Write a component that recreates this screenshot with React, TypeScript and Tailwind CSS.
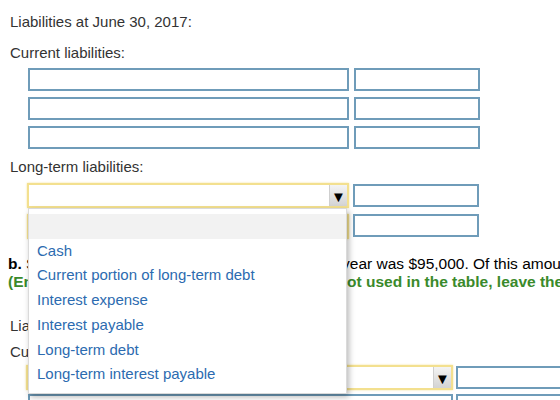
const OPTIONS = [
  "",
  "Cash",
  "Current portion of long-term debt",
  "Interest expense",
  "Interest payable",
  "Long-term debt",
  "Long-term interest payable",
];

function Box({ w }: { w: string }) {
  return <div className={`h-[23px] shrink-0 border-2 border-[#6f9cb9] bg-white ${w}`} />;
}

function Select({ w, open }: { w: string; open?: boolean }) {
  return (
    <div className={`relative shrink-0 ${w}`}>
      <div className="flex h-[25px] items-stretch border-2 border-[#f3e08f] bg-white shadow-[0_0_2px_#f5e39a]">
        <div className="flex-1" />
        <div className="flex w-[18px] items-center justify-center border-l border-[#cfcfcf] bg-gradient-to-b from-[#f4f4f4] to-[#d3d3d3] pt-[1px] text-[15px] leading-none text-black">
          ▼
        </div>
      </div>
      {open && (
        <div className="absolute left-[1px] top-[25px] z-10 w-[319px] border border-[#dadada] bg-white pb-[6px] pt-[5px] shadow-[2px_3px_6px_rgba(0,0,0,0.28)]">
          {OPTIONS.map((o, i) => (
            <div
              key={i}
              className={`flex h-[24.7px] items-center pl-[8px] text-[15px] text-[#2c6bb0] ${
                i === 0 ? "bg-[#f2f2f2]" : ""
              }`}
            >
              {o}
            </div>
          ))}
        </div>
      )}
    </div>
  );
}

export default function App() {
  return (
    <div className="h-[400px] w-[560px] overflow-hidden bg-white pt-[12px] font-['Liberation_Sans',Arial,sans-serif] text-[15px] text-[#333]">
      <p className="pl-[10px] leading-[20px]">Liabilities at June 30, 2017:</p>
      <p className="mt-[11px] pl-[10px] leading-[20px]">Current liabilities:</p>

      <div className="mt-[5px] flex flex-col gap-[6px] pl-[28px]">
        {[0, 1, 2].map((r) => (
          <div key={r} className="flex gap-[5px]">
            <Box w="w-[321px]" />
            <Box w="w-[126px]" />
          </div>
        ))}
      </div>

      <p className="mt-[8px] pl-[10px] leading-[20px]">Long-term liabilities:</p>

      <div className="mt-[6px] flex flex-col gap-[6px] pl-[27px]">
        <div className="flex items-start gap-[4px]">
          <Select w="w-[322px]" open />
          <div className="mt-[1px]">
            <Box w="w-[126px]" />
          </div>
        </div>
        <div className="flex items-start gap-[4px]">
          <Select w="w-[322px]" />
          <Box w="w-[126px]" />
        </div>
      </div>

      <p className="mt-[16px] whitespace-nowrap pl-[8px] text-[15.5px] leading-[18px] text-black">
        <b>b.</b>{" "}
        <span className="inline-block w-[316px] overflow-hidden align-bottom">
          Suppose that the total interest expense for the
        </span>
        year was $95,000. Of this amount, $17,000 was
      </p>
      <p className="whitespace-nowrap pl-[8px] text-[15.5px] font-bold leading-[18px] text-[#3a8a2b]">
        <span className="inline-block w-[339px] overflow-hidden align-bottom">
          (Enter your answers in thousands. If an amount box does n
        </span>
        ot used in the table, leave the box empty.)
      </p>

      <p className="mt-[25px] pl-[10px] leading-[20px]">Liabilities at December 31, 2017:</p>
      <p className="mt-[6px] pl-[10px] leading-[20px]">Current liabilities:</p>

      <div className="mt-[3px] flex flex-col gap-[4px] pl-[26px]">
        <div className="flex items-start gap-[3px]">
          <Select w="w-[427px]" />
          <div className="mt-[1px]">
            <Box w="w-[140px]" />
          </div>
        </div>
        <div className="flex items-start gap-[3px] pl-[2px]">
          <Box w="w-[425px]" />
          <Box w="w-[140px]" />
        </div>
      </div>
    </div>
  );
}
